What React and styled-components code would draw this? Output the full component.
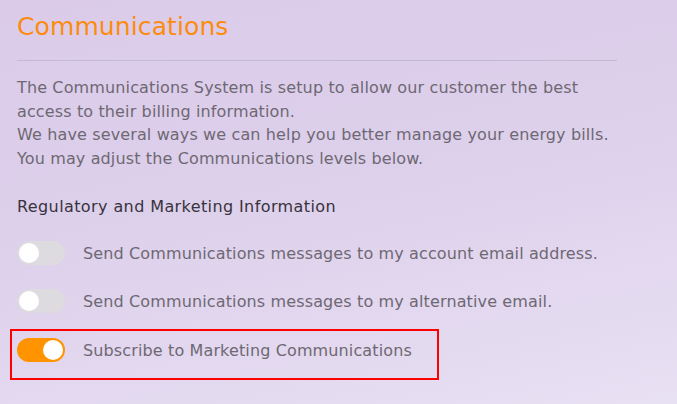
import React, { useState } from "react";
import styled, { createGlobalStyle } from "styled-components";

const GlobalStyle = createGlobalStyle`
  html, body {
    margin: 0;
    padding: 0;
  }
  body {
    font-family: "DejaVu Sans", "Noto Sans", sans-serif;
    background: linear-gradient(168deg, #dbcbe9 0%, #ddd0eb 45%, #e8e0f3 100%);
    min-height: 404px;
  }
`;

const Page = styled.div`
  width: 677px;
  height: 404px;
  box-sizing: border-box;
  padding: 12px 0 0 17px;
  display: flex;
  flex-direction: column;
`;

const Title = styled.h1`
  margin: 0;
  font-size: 25px;
  font-weight: 400;
  color: #fb8c0f;
  line-height: 30px;
  letter-spacing: 0.1px;
`;

const Divider = styled.hr`
  width: 600px;
  margin: 18px 0 0 0;
  border: none;
  border-top: 1px solid #c5bad6;
`;

const Intro = styled.p`
  margin: 15px 0 0 0;
  font-size: 16px;
  line-height: 23.5px;
  letter-spacing: 0.13px;
  color: #6e6873;
`;

const Subheading = styled.h2`
  margin: 25px 0 0 0;
  font-size: 16px;
  font-weight: 400;
  line-height: 24px;
  letter-spacing: 0.4px;
  color: #38333d;
`;

const Options = styled.div`
  display: flex;
  flex-direction: column;
  align-items: flex-start;
  gap: 24px;
  margin-top: 22px;
`;

const OptionRow = styled.label`
  display: flex;
  align-items: center;
  gap: 18px;
  height: 24px;
  cursor: pointer;
`;

const Highlight = styled.div`
  margin: -8px 0 0 -7px;
  width: 429px;
  height: 51px;
  box-sizing: border-box;
  border: 2px solid #ff0000;
  padding: 7px 0 0 5px;
  display: flex;
  align-items: flex-start;
`;

const Track = styled.span`
  position: relative;
  flex: none;
  width: 48px;
  height: 24px;
  border-radius: 12px;
  background: ${(props) => (props.on ? "#ff9300" : "#dddae0")};
  transition: background 0.2s ease;
`;

const Knob = styled.span`
  position: absolute;
  top: 2px;
  left: ${(props) => (props.on ? "26px" : "2px")};
  width: 20px;
  height: 20px;
  border-radius: 50%;
  background: #ffffff;
  transition: left 0.2s ease;
`;

const OptionText = styled.span`
  font-size: 16px;
  letter-spacing: 0.13px;
  color: #6e6873;
  white-space: nowrap;
`;

const Toggle = ({ on, onClick, children }) => (
  <OptionRow onClick={onClick}>
    <Track on={on}>
      <Knob on={on} />
    </Track>
    <OptionText>{children}</OptionText>
  </OptionRow>
);

const App = () => {
  const [prefs, setPrefs] = useState({
    account: false,
    alternative: false,
    marketing: true,
  });

  const flip = (key) => setPrefs({ ...prefs, [key]: !prefs[key] });

  return (
    <>
      <GlobalStyle />
      <Page>
        <Title>Communications</Title>
        <Divider />
        <Intro>
          The Communications System is setup to allow our customer the best
          <br />
          access to their billing information.
          <br />
          We have several ways we can help you better manage your energy bills.
          <br />
          You may adjust the Communications levels below.
        </Intro>
        <Subheading>Regulatory and Marketing Information</Subheading>
        <Options>
          <Toggle on={prefs.account} onClick={() => flip("account")}>
            Send Communications messages to my account email address.
          </Toggle>
          <Toggle on={prefs.alternative} onClick={() => flip("alternative")}>
            Send Communications messages to my alternative email.
          </Toggle>
          <Highlight>
            <Toggle on={prefs.marketing} onClick={() => flip("marketing")}>
              Subscribe to Marketing Communications
            </Toggle>
          </Highlight>
        </Options>
      </Page>
    </>
  );
};

export default App;
